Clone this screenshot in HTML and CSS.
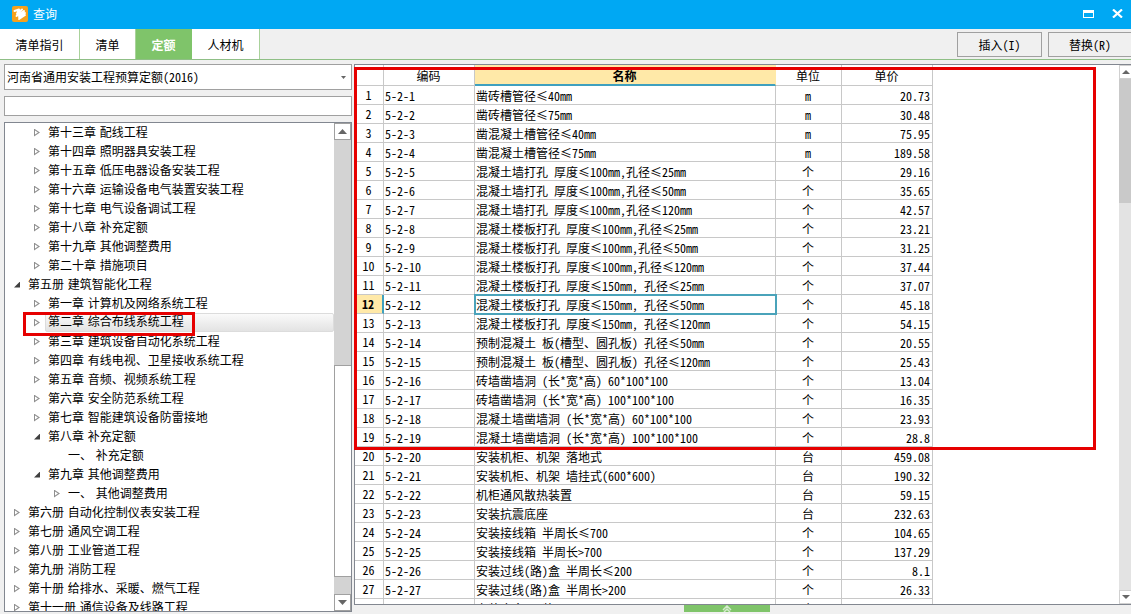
FILE: index.html
```html
<!DOCTYPE html>
<html lang="zh-CN">
<head>
<meta charset="utf-8">
<title>查询</title>
<link rel="stylesheet" href="styles.css">
</head>
<body>
<header class="titlebar">
  <svg class="logo" width="16" height="16" viewBox="0 0 16 16" aria-hidden="true">
    <rect width="16" height="16" rx="2" fill="#f5a11d"/>
    <path d="M2.500 5 7 3.500 5 8l5-4.500M4.500 10 12 5 7 11l6-4M7 13l6-4" stroke="#fff" stroke-width="2" stroke-linecap="round" stroke-linejoin="round" fill="none"/>
  </svg>
  <h1 class="title">查询</h1>
  <button class="winbtn" aria-label="最大化"><svg width="11" height="8" viewBox="0 0 11 8"><path d="M0 0h11v8H0zM1 3v4h9V3z" fill="#fff" fill-rule="evenodd"/></svg></button>
  <button class="winbtn" aria-label="关闭"><svg width="11" height="9" viewBox="0 0 11 9"><path d="M1 .5l9 8M10 .5l-9 8" stroke="#fff" stroke-width="2.200"/></svg></button>
</header>

<nav class="toolbar">
  <button class="tab tab-wide">清单指引</button>
  <button class="tab">清单</button>
  <button class="tab tab-active">定额</button>
  <button class="tab tab-mid">人材机</button>
  <div class="actions">
    <button class="action">插入(I)</button>
    <button class="action action-last">替换(R)</button>
  </div>
</nav>

<main class="content">
  <aside class="side">
    <div class="combo">
      <select class="combo-select" aria-label="定额库"><option>河南省通用安装工程预算定额(2016)</option></select>
      <svg class="combo-arrow" width="5" height="3" viewBox="0 0 5 3"><path d="M0 0h5L2.500 3z" fill="#666"/></svg>
    </div>
    <input class="search" type="text" aria-label="搜索">
    <div class="tree-box">
      <ul class="tree">
        <li class="node l2 closed">第十三章 配线工程</li>
        <li class="node l2 closed">第十四章 照明器具安装工程</li>
        <li class="node l2 closed">第十五章 低压电器设备安装工程</li>
        <li class="node l2 closed">第十六章 运输设备电气装置安装工程</li>
        <li class="node l2 closed">第十七章 电气设备调试工程</li>
        <li class="node l2 closed">第十八章 补充定额</li>
        <li class="node l2 closed">第十九章 其他调整费用</li>
        <li class="node l2 closed">第二十章 措施项目</li>
        <li class="node l1 open">第五册 建筑智能化工程</li>
        <li class="node l2 closed">第一章 计算机及网络系统工程</li>
        <li class="node l2 closed selected"><span class="node-text">第二章 综合布线系统工程</span><span class="mark mark-node"></span></li>
        <li class="node l2 closed">第三章 建筑设备自动化系统工程</li>
        <li class="node l2 closed">第四章 有线电视、卫星接收系统工程</li>
        <li class="node l2 closed">第五章 音频、视频系统工程</li>
        <li class="node l2 closed">第六章 安全防范系统工程</li>
        <li class="node l2 closed">第七章 智能建筑设备防雷接地</li>
        <li class="node l2 open">第八章 补充定额</li>
        <li class="node l3">一、 补充定额</li>
        <li class="node l2 open">第九章 其他调整费用</li>
        <li class="node l3 closed">一、 其他调整费用</li>
        <li class="node l1 closed">第六册 自动化控制仪表安装工程</li>
        <li class="node l1 closed">第七册 通风空调工程</li>
        <li class="node l1 closed">第八册 工业管道工程</li>
        <li class="node l1 closed">第九册 消防工程</li>
        <li class="node l1 closed">第十册 给排水、采暖、燃气工程</li>
        <li class="node l1 closed">第十一册 通信设备及线路工程</li>
      </ul>
      <div class="scroll scroll-tree">
        <button class="scroll-btn" aria-label="向上"><svg width="9" height="5" viewBox="0 0 9 5"><path d="M0 5h9L4.500 0z" fill="#666"/></svg></button>
        <div class="tree-before"></div>
        <div class="tree-thumb"></div>
        <div class="tree-after"></div>
        <button class="scroll-btn" aria-label="向下"><svg width="9" height="5" viewBox="0 0 9 5"><path d="M0 0h9L4.500 5z" fill="#666"/></svg></button>
      </div>
    </div>
  </aside>

  <section class="grid-area">
    <div class="grid-box">
      <div class="grid-view">
        <table class="grid">
          <colgroup><col class="c-no"><col class="c-code"><col class="c-name"><col class="c-unit"><col class="c-price"></colgroup>
          <thead><tr><th></th><th>编码</th><th class="current-col">名称</th><th>单位</th><th>单价</th></tr></thead>
          <tbody>
            <tr><th>1</th><td>5-2-1</td><td>凿砖槽管径≤40mm</td><td>m</td><td>20.73</td></tr>
            <tr><th>2</th><td>5-2-2</td><td>凿砖槽管径≤75mm</td><td>m</td><td>30.48</td></tr>
            <tr><th>3</th><td>5-2-3</td><td>凿混凝土槽管径≤40mm</td><td>m</td><td>75.95</td></tr>
            <tr><th>4</th><td>5-2-4</td><td>凿混凝土槽管径≤75mm</td><td>m</td><td>189.58</td></tr>
            <tr><th>5</th><td>5-2-5</td><td>混凝土墙打孔 厚度≤100mm,孔径≤25mm</td><td>个</td><td>29.16</td></tr>
            <tr><th>6</th><td>5-2-6</td><td>混凝土墙打孔 厚度≤100mm,孔径≤50mm</td><td>个</td><td>35.65</td></tr>
            <tr><th>7</th><td>5-2-7</td><td>混凝土墙打孔 厚度≤100mm,孔径≤120mm</td><td>个</td><td>42.57</td></tr>
            <tr><th>8</th><td>5-2-8</td><td>混凝土楼板打孔 厚度≤100mm,孔径≤25mm</td><td>个</td><td>23.21</td></tr>
            <tr><th>9</th><td>5-2-9</td><td>混凝土楼板打孔 厚度≤100mm,孔径≤50mm</td><td>个</td><td>31.25</td></tr>
            <tr><th>10</th><td>5-2-10</td><td>混凝土楼板打孔 厚度≤100mm,孔径≤120mm</td><td>个</td><td>37.44</td></tr>
            <tr><th>11</th><td>5-2-11</td><td>混凝土楼板打孔 厚度≤150mm, 孔径≤25mm</td><td>个</td><td>37.07</td></tr>
            <tr class="current-row"><th>12</th><td>5-2-12</td><td class="current-cell">混凝土楼板打孔 厚度≤150mm, 孔径≤50mm</td><td>个</td><td>45.18</td></tr>
            <tr><th>13</th><td>5-2-13</td><td>混凝土楼板打孔 厚度≤150mm, 孔径≤120mm</td><td>个</td><td>54.15</td></tr>
            <tr><th>14</th><td>5-2-14</td><td>预制混凝土 板(槽型、圆孔板) 孔径≤50mm</td><td>个</td><td>20.55</td></tr>
            <tr><th>15</th><td>5-2-15</td><td>预制混凝土 板(槽型、圆孔板) 孔径≤120mm</td><td>个</td><td>25.43</td></tr>
            <tr><th>16</th><td>5-2-16</td><td>砖墙凿墙洞 (长*宽*高) 60*100*100</td><td>个</td><td>13.04</td></tr>
            <tr><th>17</th><td>5-2-17</td><td>砖墙凿墙洞 (长*宽*高) 100*100*100</td><td>个</td><td>16.35</td></tr>
            <tr><th>18</th><td>5-2-18</td><td>混凝土墙凿墙洞 (长*宽*高) 60*100*100</td><td>个</td><td>23.93</td></tr>
            <tr><th>19</th><td>5-2-19</td><td>混凝土墙凿墙洞 (长*宽*高) 100*100*100</td><td>个</td><td>28.8</td></tr>
            <tr><th>20</th><td>5-2-20</td><td>安装机柜、机架 落地式</td><td>台</td><td>459.08</td></tr>
            <tr><th>21</th><td>5-2-21</td><td>安装机柜、机架 墙挂式(600*600)</td><td>台</td><td>190.32</td></tr>
            <tr><th>22</th><td>5-2-22</td><td>机柜通风散热装置</td><td>台</td><td>59.15</td></tr>
            <tr><th>23</th><td>5-2-23</td><td>安装抗震底座</td><td>台</td><td>232.63</td></tr>
            <tr><th>24</th><td>5-2-24</td><td>安装接线箱 半周长≤700</td><td>个</td><td>104.65</td></tr>
            <tr><th>25</th><td>5-2-25</td><td>安装接线箱 半周长&gt;700</td><td>个</td><td>137.29</td></tr>
            <tr><th>26</th><td>5-2-26</td><td>安装过线(路)盒 半周长≤200</td><td>个</td><td>8.1</td></tr>
            <tr><th>27</th><td>5-2-27</td><td>安装过线(路)盒 半周长&gt;200</td><td>个</td><td>26.33</td></tr>
            <tr><th></th><td></td><td>安装底盒 明装</td><td>个</td><td></td></tr>
          </tbody>
        </table>
      </div>
      <div class="scroll scroll-grid">
        <button class="scroll-btn" aria-label="向上"><svg width="8" height="4" viewBox="0 0 8 4"><path d="M0 4h8L4 0z" fill="#666"/></svg></button>
        <div class="grid-thumb"></div>
        <div class="grid-track"></div>
        <button class="scroll-btn" aria-label="向下"><svg width="8" height="4" viewBox="0 0 8 4"><path d="M0 0h8L4 4z" fill="#666"/></svg></button>
      </div>
      <span class="mark mark-grid"></span>
    </div>
    <button class="expander" aria-label="展开"><svg width="10" height="7" viewBox="0 0 10 7"><path d="M1 5l4-4 4 4M2 7l3-3 3 3" stroke="#d5ebce" stroke-width="1.500" fill="none"/></svg></button>
  </section>
</main>
</body>
</html>
```
FILE: styles.css
```css
* { box-sizing: border-box; }

body {
  margin: 0;
  height: 100vh;
  display: flex;
  flex-direction: column;
  overflow: hidden;
  background: #f0f0f0;
  color: #000;
  font: 12px/18px "Noto Sans Mono CJK SC", "Liberation Sans", "Noto Sans CJK SC", sans-serif;
}

button, select, input { font: inherit; color: inherit; margin: 0; padding: 0; }
button { border: 0; background: none; }
svg { display: block; }

.titlebar {
  flex: none;
  display: flex;
  align-items: center;
  height: 29px;
  padding: 0 8px 2px 12px;
  background: #00a8f3;
}
.title { flex: 1; margin: 0 0 0 5px; font-size: 12px; font-weight: 400; color: #fff; }
.winbtn { display: flex; align-items: center; justify-content: center; width: 11px; height: 20px; margin-left: 18px; }

.toolbar {
  flex: none;
  display: flex;
  height: 31px;
  border-bottom: 1px solid #8fbf86;
}
.tab {
  width: 56px;
  padding-top: 2px;
  background: #fff;
  border-right: 1px solid #a9d29b;
}
.tab-wide { width: 80px; }
.tab-mid { width: 68px; }
.tab-active { background: #7fc46a; border-color: #7fc46a; color: #fff; font-weight: 700; }
.actions { display: flex; gap: 6px; margin-left: auto; padding: 3px 0 2px; }
.action { width: 85px; border: 1px solid #a0a0a0; }
.action-last { width: 83px; border-right: 0; }

.content { flex: 1; min-height: 0; display: flex; gap: 2px; padding: 4px 0 2px 4px; }

.side { flex: none; width: 348px; display: flex; flex-direction: column; }
.combo { position: relative; height: 26px; margin-bottom: 6px; }
.combo-select {
  appearance: none;
  width: 100%;
  height: 100%;
  padding: 0 16px 0 2px;
  border: 1px solid #a0a0a0;
  border-radius: 0;
  background: #fff;
}
.combo-arrow { position: absolute; right: 6px; top: 12px; }
.search { width: 100%; height: 20px; margin-bottom: 6px; padding: 0 3px; border: 1px solid #a0a0a0; background: #fff; }

.tree-box { flex: 1; min-height: 0; display: flex; border: 1px solid #828790; background: #fff; }
.tree {
  flex: 1;
  margin: 0;
  padding: 0;
  overflow: hidden;
  list-style: none;
  font-family: "DejaVu Sans", "Noto Sans CJK SC", sans-serif;
}
.node { position: relative; display: flex; align-items: center; height: 19px; line-height: 18px; white-space: nowrap; }
.node::before { content: ""; flex: none; width: 6px; height: 8px; margin-right: 8px; }
.l1 { padding-left: 9px; }
.l2 { padding-left: 29px; }
.l3 { padding-left: 49px; }
.closed::before { background: #909090; clip-path: polygon(0 0, 100% 50%, 0 100%, 0 0, 1px 2px, 1px 6px, 4px 50%, 1px 2px); }
.open::before { height: 6px; background: #404040; clip-path: polygon(100% 0, 100% 100%, 0 100%); }
.selected .node-text {
  flex: 1;
  height: 19px;
  margin-left: -3px;
  padding-left: 2px;
  border: 1px solid #dcdcdc;
  border-radius: 2px;
  background: linear-gradient(#fafafa, #e3e3e3);
  line-height: 17px;
}

.scroll { flex: none; display: flex; flex-direction: column; }
.scroll-btn { flex: none; display: flex; align-items: center; justify-content: center; background: #fff; }
.scroll-tree { width: 17px; background: #d3d3d3; }
.scroll-tree .scroll-btn { height: 17px; border: 1px solid #a0a0a0; }
.tree-before { flex: 226; }
.tree-thumb { flex: 211; border: solid #a0a0a0; border-width: 1px 0 1px 1px; background: #fff; }
.tree-after { flex: 17; }

.grid-area { flex: 1; min-width: 0; display: flex; flex-direction: column; }
.grid-box {
  position: relative;
  flex: 1;
  min-height: 0;
  display: flex;
  border: 1px solid #828790;
  border-right: 0;
  background: #fff;
}
.grid-view { flex: 1; min-width: 0; overflow: hidden; }
.grid { width: 578px; table-layout: fixed; border-collapse: separate; border-spacing: 0; }
.c-no { width: 29px; }
.c-code { width: 91px; }
.c-name { width: 301px; }
.c-unit { width: 66px; }
.c-price { width: 91px; }
.grid th, .grid td {
  height: 19px;
  padding: 0 2px 0 1px;
  border: solid #c8c8c8;
  border-width: 0 1px 1px 0;
  font-weight: 400;
  line-height: 18px;
  text-align: left;
  white-space: nowrap;
}
.grid td { padding-top: 1px; line-height: 17px; }
.grid thead th { height: 21px; padding-top: 2px; text-align: center; }
.grid tbody th, .grid td:nth-child(4) { text-align: center; }
.grid td:nth-child(5) { text-align: right; }
.grid thead .current-col { background: #ffe9a8; border-right-color: #ffe9a8; border-bottom: 2px solid #3fa0bf; line-height: 17px; font-weight: 700; }
.grid .current-row th { background: #ffe9a8; border-right: 2px solid #3fa0bf; font-weight: 700; }
.grid .current-cell { outline: 2px solid #4aa3ba; outline-offset: -1px; }

.scroll-grid { width: 12px; }
.scroll-grid .scroll-btn { height: 14px; border: 1px solid #d0d0d0; border-right: 0; }
.grid-thumb { flex: 124; background: #c9c9c9; }
.grid-track { flex: 387; background: #e3e3e3; }

.expander { display: flex; justify-content: center; width: 86px; height: 7px; margin-left: 330px; background: #7fc46a; overflow: hidden; }

/* Highlight frames laid over the tree and the table */
.mark { position: absolute; border: 3px solid #e60000; pointer-events: none; }
.mark-node { left: 18px; top: -1px; width: 172px; height: 24px; z-index: 1; }
.mark-grid { left: -1px; right: 35px; top: 2px; height: 383px; }
```
